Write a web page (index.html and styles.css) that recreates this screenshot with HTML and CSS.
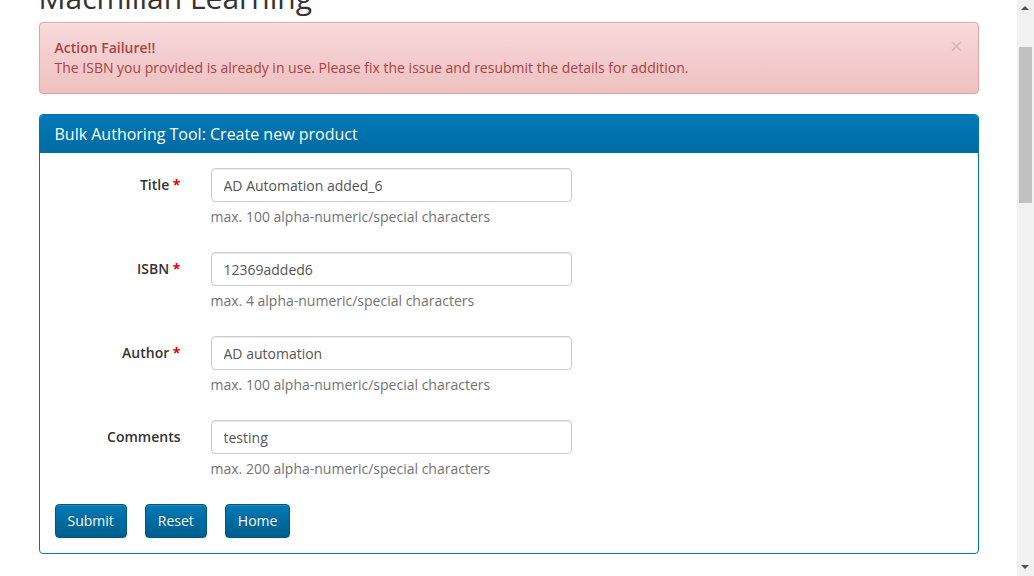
FILE: index.html
```html
<!DOCTYPE html>
<html lang="en">
<head>
<meta charset="utf-8">
<title>Macmillan Learning - Bulk Authoring Tool</title>
<link rel="stylesheet" href="styles.css">
</head>
<body>
<div class="page">
  <div class="container">
    <h1 class="site-title">Macmillan Learning</h1>
    <div class="alert">
      <button class="close" type="button" aria-label="Close">&times;</button>
      <strong class="alert-title">Action Failure!!</strong>
      <div>The ISBN you provided is already in use. Please fix the issue and resubmit the details for addition.</div>
    </div>
    <div class="panel">
      <div class="panel-heading">Bulk Authoring Tool: Create new product</div>
      <form class="panel-body">
        <div class="form-group">
          <label class="form-label">Title <span class="req">*</span></label>
          <div class="field">
            <input class="form-control" type="text" value="AD Automation added_6">
            <div class="help">max. 100 alpha-numeric/special characters</div>
          </div>
        </div>
        <div class="form-group">
          <label class="form-label">ISBN <span class="req">*</span></label>
          <div class="field">
            <input class="form-control" type="text" value="12369added6">
            <div class="help">max. 4 alpha-numeric/special characters</div>
          </div>
        </div>
        <div class="form-group">
          <label class="form-label">Author <span class="req">*</span></label>
          <div class="field">
            <input class="form-control" type="text" value="AD automation">
            <div class="help">max. 100 alpha-numeric/special characters</div>
          </div>
        </div>
        <div class="form-group">
          <label class="form-label">Comments</label>
          <div class="field">
            <input class="form-control" type="text" value="testing">
            <div class="help">max. 200 alpha-numeric/special characters</div>
          </div>
        </div>
        <div class="actions">
          <button class="btn" type="button">Submit</button>
          <button class="btn" type="button">Reset</button>
          <button class="btn" type="button">Home</button>
        </div>
      </form>
    </div>
  </div>
</div>
<div class="scrollbar" aria-hidden="true">
  <span class="arrow arrow-up"></span>
  <span class="thumb"></span>
  <span class="arrow arrow-down"></span>
</div>
</body>
</html>
```

FILE: styles.css
```css
* { box-sizing: border-box; }
html, body { margin: 0; padding: 0; height: 100%; overflow: hidden; }
body {
  font-family: "Open Sans", "Liberation Sans", Arial, sans-serif;
  font-size: 14px;
  line-height: 20px;
  color: #333;
  background: #fff;
}
.page { margin-right: 17px; }
.container { width: 940px; margin: 0 auto; }

.site-title {
  font-size: 30px;
  font-weight: 400;
  line-height: 33px;
  margin: -19px 0 8px;
  color: #333;
}

.alert {
  position: relative;
  padding: 15px 35px 15px 15px;
  border: 1px solid #dca7a7;
  border-radius: 4px;
  color: #a94442;
  background: linear-gradient(to bottom, #f8d9da 0, #efc0c0 100%);
  box-shadow: inset 0 1px 0 rgba(255,255,255,.25), 0 1px 2px rgba(0,0,0,.05);
  margin-bottom: 20px;
}
.alert-title { display: block; font-weight: 600; }
.close {
  position: absolute;
  top: 12px;
  right: 15px;
  padding: 0;
  border: 0;
  background: none;
  font-family: "Open Sans", "Liberation Sans", Arial, sans-serif;
  font-size: 22px;
  font-weight: 400;
  line-height: 20px;
  color: #000;
  opacity: .13;
  cursor: pointer;
}

.panel {
  border: 1px solid #0077b3;
  border-radius: 4px;
  background: #fff;
}
.panel-heading {
  padding: 10px 15px;
  font-size: 16px;
  line-height: 18px;
  color: #fff;
  background: linear-gradient(to bottom, #007ab7 0, #006aa3 100%);
  border-radius: 3px 3px 0 0;
}
.panel-body { padding: 15px; margin: 0; }

.form-group {
  display: grid;
  grid-template-columns: 126px 361px;
  column-gap: 30px;
  margin-bottom: 15px;
}
.form-label {
  text-align: right;
  font-weight: 600;
  padding-top: 7px;
  color: #333;
}
.req { color: #e00; font-weight: 700; }
.form-control {
  display: block;
  width: 100%;
  height: 34px;
  padding: 6px 12px;
  font-family: inherit;
  font-size: 14px;
  line-height: 20px;
  color: #555;
  background: #fff;
  border: 1px solid #ccc;
  border-radius: 4px;
  box-shadow: inset 0 1px 1px rgba(0,0,0,.075);
}
.help {
  margin: 5px 0 10px;
  color: #737373;
}

.actions { display: flex; gap: 18px; }
.btn {
  height: 34px;
  padding: 6px 12px;
  font-family: inherit;
  font-size: 14px;
  line-height: 20px;
  color: #fff;
  text-shadow: 0 -1px 0 rgba(0,0,0,.2);
  background: linear-gradient(to bottom, #007ab4 0, #005d8e 100%);
  border: 1px solid #00547f;
  border-radius: 4px;
  box-shadow: inset 0 1px 0 rgba(255,255,255,.15), 0 1px 1px rgba(0,0,0,.075);
  cursor: pointer;
}

.scrollbar {
  position: fixed;
  top: 0;
  right: 0;
  width: 17px;
  height: 100%;
  background: #f1f1f1;
}
.thumb {
  position: absolute;
  left: 2px;
  top: 47px;
  width: 13px;
  height: 156px;
  background: #c1c1c1;
}
.arrow {
  position: absolute;
  left: 4px;
  width: 0;
  height: 0;
  border-left: 4px solid transparent;
  border-right: 4px solid transparent;
}
.arrow-up { top: 6px; border-bottom: 4px solid #505050; }
.arrow-down { bottom: 7px; border-top: 4px solid #505050; }
```
